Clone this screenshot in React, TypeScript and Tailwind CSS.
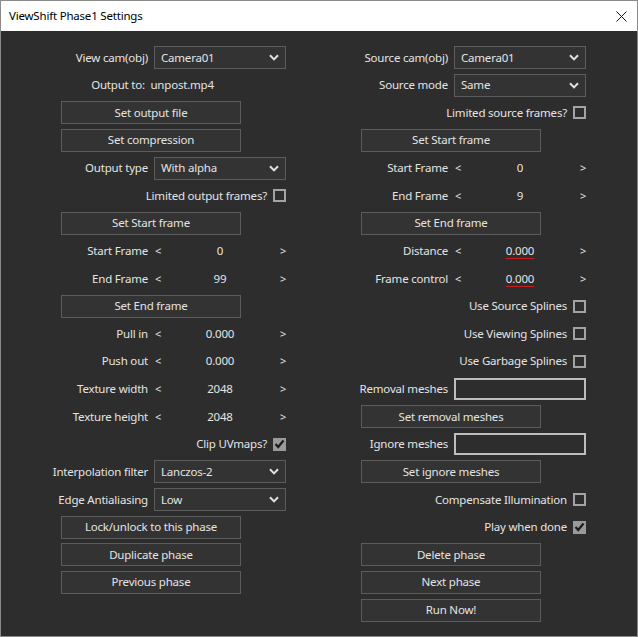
import type { ReactNode } from "react";

const FONT = { fontFamily: '"Noto Sans", "Open Sans", sans-serif' };

/** Every row in both columns shares one pitch so the two sides line up. */
function Row({ children, className = "" }: { children: ReactNode; className?: string }) {
  return <div className={`flex h-[27.63px] shrink-0 items-center ${className}`}>{children}</div>;
}

function Field({ label, children }: { label: string; children: ReactNode }) {
  return (
    <Row>
      <div className="grid grid-cols-[147px_132px] items-center gap-x-[6px]">
        <span className="whitespace-nowrap text-right">{label}</span>
        {children}
      </div>
    </Row>
  );
}

function Dropdown({ value }: { value: string }) {
  return (
    <div className="flex h-[23px] items-center justify-between border border-[#5c5c5c] bg-[#333333] pl-[6px] pr-[6px]">
      <span>{value}</span>
      <svg width="10" height="7" viewBox="0 0 10 7" aria-hidden>
        <polyline points="1,1.2 5,5.4 9,1.2" fill="none" stroke="#e2e2e2" strokeWidth="2" />
      </svg>
    </div>
  );
}

function Spinner({ value, flagged = false }: { value: string; flagged?: boolean }) {
  return (
    <div className="grid grid-cols-[12px_1fr_12px] items-center">
      <span className="pl-[1px] text-[11px]">&lt;</span>
      <span
        className={
          flagged
            ? "text-center underline decoration-[#c81e1e] decoration-1 underline-offset-[3px]"
            : "text-center"
        }
      >
        {value}
      </span>
      <span className="text-right text-[11px]">&gt;</span>
    </div>
  );
}

function TextBox() {
  return <div className="h-[22px] border-2 border-[#bdbdbd] bg-[#2d2d2d]" />;
}

function Button({ children }: { children: ReactNode }) {
  return (
    <Row className="justify-center">
      <button className="h-[23px] w-[180px] border border-[#5c5c5c] bg-[#333333] text-[#e4e4e4]">
        {children}
      </button>
    </Row>
  );
}

function Check({ label, checked = false }: { label: string; checked?: boolean }) {
  return (
    <Row className="justify-end gap-[6px] pr-[15px]">
      <span className="whitespace-nowrap">{label}</span>
      {checked ? (
        <span className="flex size-[13px] items-center justify-center bg-[#9a9a9a]">
          <svg width="11" height="10" viewBox="0 0 11 10" aria-hidden>
            <polyline points="1.5,5 4.2,8 9.5,1.5" fill="none" stroke="#1c1c1c" strokeWidth="2.2" />
          </svg>
        </span>
      ) : (
        <span className="size-[13px] border-2 border-[#a3a3a3] bg-[#2d2d2d]" />
      )}
    </Row>
  );
}

function LeftColumn() {
  return (
    <div className="flex w-[300px] flex-col">
      <Field label="View cam(obj)">
        <Dropdown value="Camera01" />
      </Field>
      <Row className="justify-center">
        <span className="whitespace-pre pl-[3px]">Output to:  unpost.mp4</span>
      </Row>
      <Button>Set output file</Button>
      <Button>Set compression</Button>
      <Field label="Output type">
        <Dropdown value="With alpha" />
      </Field>
      <Check label="Limited output frames?" />
      <Button>Set Start frame</Button>
      <Field label="Start Frame">
        <Spinner value="0" />
      </Field>
      <Field label="End Frame">
        <Spinner value="99" />
      </Field>
      <Button>Set End frame</Button>
      <Field label="Pull in">
        <Spinner value="0.000" />
      </Field>
      <Field label="Push out">
        <Spinner value="0.000" />
      </Field>
      <Field label="Texture width">
        <Spinner value="2048" />
      </Field>
      <Field label="Texture height">
        <Spinner value="2048" />
      </Field>
      <Check label="Clip UVmaps?" checked />
      <Field label="Interpolation filter">
        <Dropdown value="Lanczos-2" />
      </Field>
      <Field label="Edge Antialiasing">
        <Dropdown value="Low" />
      </Field>
      <Button>Lock/unlock to this phase</Button>
      <Button>Duplicate phase</Button>
      <Button>Previous phase</Button>
    </div>
  );
}

function RightColumn() {
  return (
    <div className="flex w-[300px] flex-col">
      <Field label="Source cam(obj)">
        <Dropdown value="Camera01" />
      </Field>
      <Field label="Source mode">
        <Dropdown value="Same" />
      </Field>
      <Check label="Limited source frames?" />
      <Button>Set Start frame</Button>
      <Field label="Start Frame">
        <Spinner value="0" />
      </Field>
      <Field label="End Frame">
        <Spinner value="9" />
      </Field>
      <Button>Set End frame</Button>
      <Field label="Distance">
        <Spinner value="0.000" flagged />
      </Field>
      <Field label="Frame control">
        <Spinner value="0.000" flagged />
      </Field>
      <Check label="Use Source Splines" />
      <Check label="Use Viewing Splines" />
      <Check label="Use Garbage Splines" />
      <Field label="Removal meshes">
        <TextBox />
      </Field>
      <Button>Set removal meshes</Button>
      <Field label="Ignore meshes">
        <TextBox />
      </Field>
      <Button>Set ignore meshes</Button>
      <Check label="Compensate Illumination" />
      <Check label="Play when done" checked />
      <Button>Delete phase</Button>
      <Button>Next phase</Button>
      <Button>Run Now!</Button>
    </div>
  );
}

export default function App() {
  return (
    <div
      className="flex h-[637px] w-[638px] flex-col border border-[#8a8a8a] text-[11.5px] leading-[16px] tracking-[-0.2px]"
      style={FONT}
    >
      {/* Window chrome: plain white title bar with the close glyph. */}
      <div className="flex h-[30px] shrink-0 items-center justify-between bg-white pl-[8px] pr-[10px] text-black">
        <span className="text-[11.5px]">ViewShift Phase1 Settings</span>
        <svg width="11" height="11" viewBox="0 0 11 11" aria-hidden>
          <path d="M0.5 0.5 L10.5 10.5 M10.5 0.5 L0.5 10.5" stroke="#111" strokeWidth="1" />
        </svg>
      </div>

      <div className="flex flex-1 bg-[#2d2d2d] pt-[12.7px] text-[#e4e4e4]">
        <LeftColumn />
        <RightColumn />
      </div>
    </div>
  );
}
